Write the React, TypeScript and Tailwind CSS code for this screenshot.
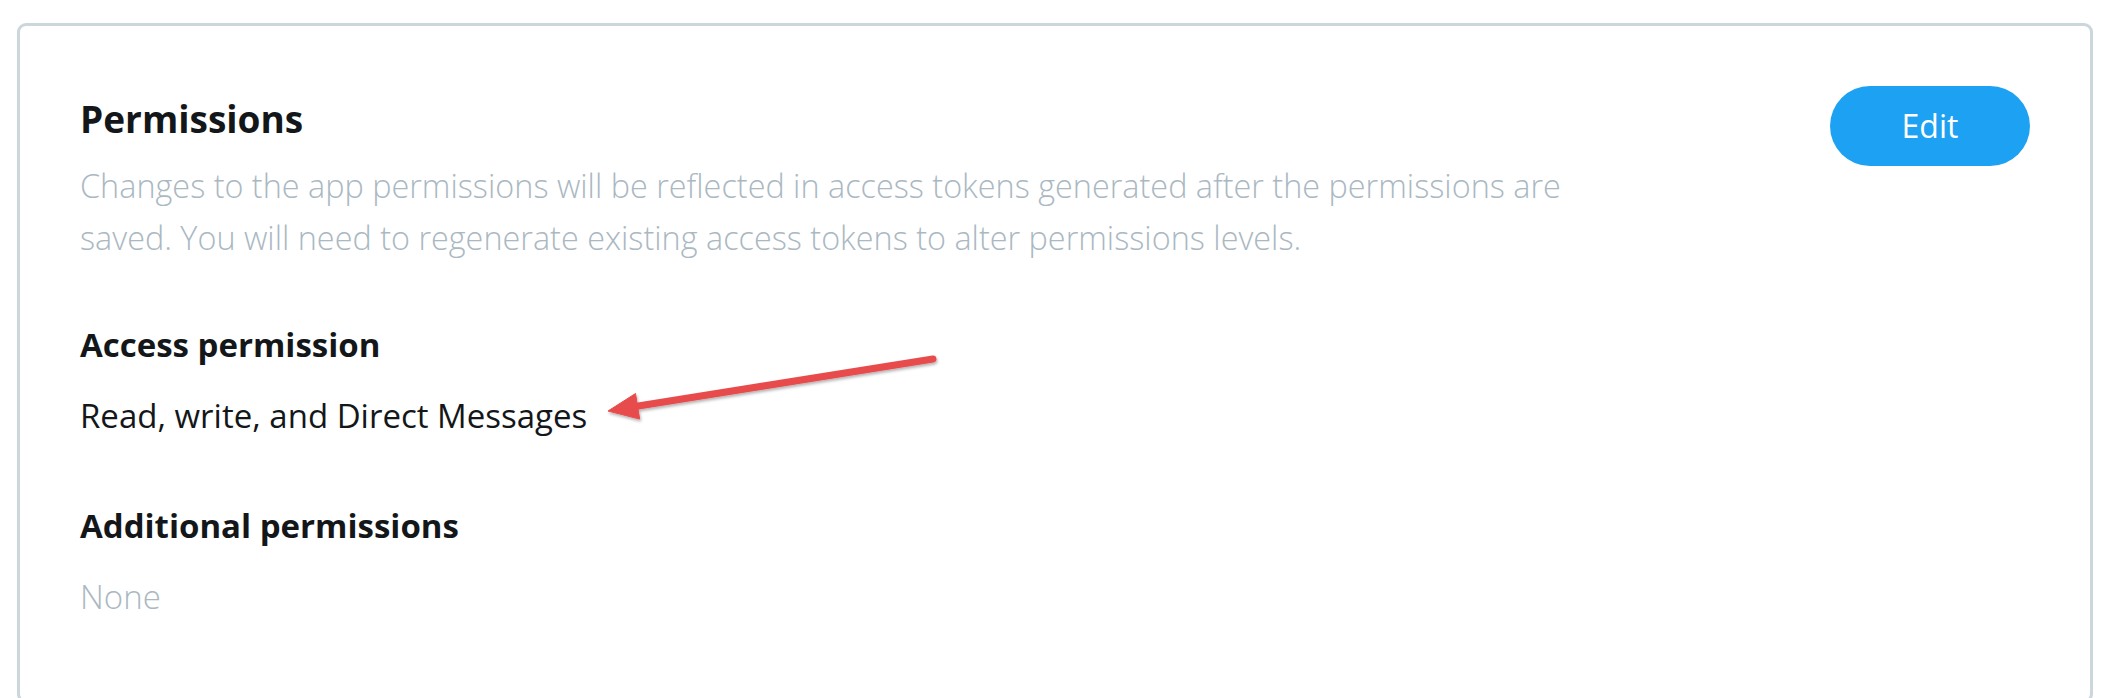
import React from 'react';

const Arrow: React.FC = () => (
  <svg
    className="absolute left-0 top-0 pointer-events-none"
    width="2114"
    height="698"
    viewBox="0 0 2114 698"
  >
    <defs>
      <filter id="arrowShadow" x="-10%" y="-50%" width="120%" height="200%">
        <feDropShadow dx="1" dy="2" stdDeviation="1.5" floodColor="#000" floodOpacity="0.3" />
      </filter>
    </defs>
    <g filter="url(#arrowShadow)" fill="#e84c4b" stroke="#e84c4b">
      <line x1="933" y1="359" x2="632" y2="407" strokeWidth="7" strokeLinecap="round" />
      <polygon points="608,411 635.5,393.5 639.7,419.1" strokeWidth="1" strokeLinejoin="round" />
    </g>
  </svg>
);

export default function App() {
  return (
    <div className="relative w-[2114px] h-[698px] bg-white overflow-hidden font-['Open_Sans',sans-serif]">
      <div className="ml-[17px] mt-[23px] w-[2076px] h-[680px] border-[3px] border-[#ccd6dd] rounded-[9px] px-[60px] pt-[60px]">
        <div className="flex justify-between items-start">
          <div>
            <h2 className="text-[37px] leading-[52px] font-bold text-[#14171a] mt-[7px]">Permissions</h2>
            <p className="mt-[14px] text-[32.4px] leading-[52px] font-light text-[#aab8c2]">
              Changes to the app permissions will be reflected in access tokens generated after the permissions are
              <br />
              saved. You will need to regenerate existing access tokens to alter permissions levels.
            </p>
          </div>
          <button className="w-[200px] h-[80px] rounded-full bg-[#1da1f2] text-white text-[32px] leading-none">
            Edit
          </button>
        </div>

        <div className="mt-[60px]">
          <h3 className="text-[33px] leading-[44px] font-bold text-[#14171a]">Access permission</h3>
          <p className="mt-[27px] text-[33px] leading-[44px] text-[#14171a]">Read, write, and Direct Messages</p>
        </div>

        <div className="mt-[66px]">
          <h3 className="text-[33px] leading-[44px] font-bold text-[#14171a]">Additional permissions</h3>
          <p className="mt-[27px] text-[33px] leading-[44px] font-light text-[#aab8c2]">None</p>
        </div>
      </div>
      <Arrow />
    </div>
  );
}
